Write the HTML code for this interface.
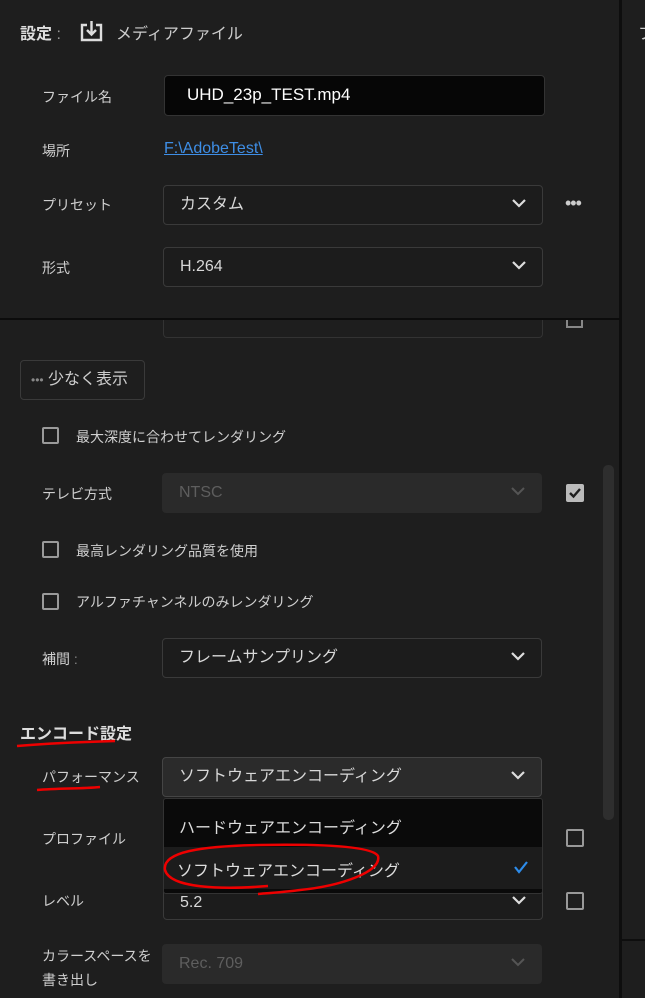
<!DOCTYPE html>
<html><head><meta charset="utf-8"><style>
*{margin:0;padding:0;box-sizing:border-box}
body{width:645px;height:998px;background:#1e1e1e;overflow:hidden;position:relative;font-family:"Liberation Sans","Noto Sans CJK JP",sans-serif;color:#d0d0d0}
.a{position:absolute;white-space:nowrap}
.lb{font-size:14px;color:#cfcfcf}
.sel{position:absolute;left:163px;width:380px;height:40px;border:1px solid #3a3a3a;border-radius:4px;background:#1c1c1c;font-size:16px;color:#d8d8d8;padding-left:16px;line-height:38px}
.dis{background:#2a2a2a;border-color:#2a2a2a;color:#5e5e5e}
.chev{position:absolute;right:16px;top:13px;width:14px;height:9px}
.cb{position:absolute;width:17px;height:17px;border:2px solid #9a9a9a;border-radius:2px}
</style></head><body>
<div class="a" style="left:0;top:0;width:620px;height:318px;background:#1e1e1e"></div>
<div class="a" style="left:619px;top:0;width:3px;height:998px;background:#0e0e0e"></div>
<div class="a" style="left:622px;top:939px;width:23px;height:2px;background:#0e0e0e"></div>
<div class="a" style="left:638px;top:20px;font-size:16px;color:#ccc">フ</div>

<div class="a" style="left:20px;top:20px;font-size:16px;font-weight:bold;color:#ddd">設定<span style="font-weight:normal;color:#999"> :</span></div>
<svg class="a" style="left:80px;top:20px" width="23" height="22" viewBox="0 0 23 22"><path d="M7 5H2V20H21V5H16" fill="none" stroke="#ddd" stroke-width="2.4"/><path d="M11.5 1V14M7 10L11.5 14.5L16 10" fill="none" stroke="#ddd" stroke-width="2.4"/></svg>
<div class="a" style="left:116px;top:20px;font-size:16px;color:#ccc">メディアファイル</div>

<div class="a lb" style="left:42px;top:87px">ファイル名</div>
<div class="a" style="left:164px;top:75px;width:381px;height:41px;background:#060606;border:1px solid #333;border-radius:4px;font-size:17px;color:#fff;padding-left:22px;line-height:38px">UHD_23p_TEST.mp4</div>
<div class="a lb" style="left:42px;top:141px">場所</div>
<div class="a" style="left:164px;top:140px;font-size:16px;color:#3e8ee6;text-decoration:underline">F:\AdobeTest\</div>
<div class="a lb" style="left:42px;top:195px">プリセット</div>
<div class="sel" style="top:185px">カスタム<svg class="chev" viewBox="0 0 14 9"><path d="M1 1L7 7L13 1" fill="none" stroke="#ddd" stroke-width="2.2"/></svg></div>
<div class="a" style="left:565px;top:193px;font-size:18px;color:#ccc;letter-spacing:-1px">•••</div>
<div class="a lb" style="left:42px;top:258px">形式</div>
<div class="sel" style="top:247px">H.264<svg class="chev" viewBox="0 0 14 9"><path d="M1 1L7 7L13 1" fill="none" stroke="#ddd" stroke-width="2.2"/></svg></div>

<div class="a" style="left:0;top:318px;width:620px;height:2px;background:#0c0c0c"></div>
<div class="a" style="left:163px;top:320px;width:380px;height:18px;border:1px solid #333;border-top:none;border-radius:0 0 4px 4px"></div>
<div class="a" style="left:566px;top:320px;width:17px;height:8px;border:2px solid #888;border-top:none"></div>

<div class="a" style="left:20px;top:360px;width:125px;height:40px;border:1px solid #3a3a3a;border-radius:4px;font-size:16px;color:#ccc;line-height:38px;padding-left:10px"><span style="color:#888;font-size:12px">•••</span> 少なく表示</div>

<div class="cb" style="left:42px;top:427px"></div>
<div class="a lb" style="left:76px;top:427px">最大深度に合わせてレンダリング</div>
<div class="a lb" style="left:42px;top:484px">テレビ方式</div>
<div class="sel dis" style="left:162px;top:473px">NTSC<svg class="chev" viewBox="0 0 14 9"><path d="M1 1L7 7L13 1" fill="none" stroke="#555" stroke-width="2"/></svg></div>
<div class="a" style="left:566px;top:484px;width:18px;height:18px;background:#bbb;border-radius:2px"><svg width="18" height="18" viewBox="0 0 18 18"><path d="M4 9L7.5 12.5L14 5" fill="none" stroke="#1e1e1e" stroke-width="2.4"/></svg></div>
<div class="cb" style="left:42px;top:541px"></div>
<div class="a lb" style="left:76px;top:541px">最高レンダリング品質を使用</div>
<div class="cb" style="left:42px;top:593px"></div>
<div class="a lb" style="left:76px;top:592px">アルファチャンネルのみレンダリング</div>
<div class="a lb" style="left:42px;top:649px">補間 <span style="color:#888">:</span></div>
<div class="sel" style="left:162px;top:638px">フレームサンプリング<svg class="chev" viewBox="0 0 14 9"><path d="M1 1L7 7L13 1" fill="none" stroke="#ddd" stroke-width="2.2"/></svg></div>

<div class="a" style="left:603px;top:465px;width:11px;height:355px;background:#2e2e2e;border-radius:5px"></div>

<div class="a" style="left:20px;top:720px;font-size:16px;font-weight:bold;color:#ddd">エンコード設定</div>
<div class="a lb" style="left:42px;top:767px">パフォーマンス</div>
<div class="sel" style="left:162px;top:757px;background:#2b2b2b;border-color:#454545">ソフトウェアエンコーディング<svg class="chev" viewBox="0 0 14 9"><path d="M1 1L7 7L13 1" fill="none" stroke="#ddd" stroke-width="2.2"/></svg></div>

<div class="a lb" style="left:42px;top:829px">プロファイル</div>
<div class="a" style="left:566px;top:829px;width:18px;height:18px;border:2px solid #999;border-radius:2px"></div>
<div class="a lb" style="left:42px;top:891px">レベル</div>
<div class="sel" style="left:163px;top:880px;height:40px;padding-top:3px">5.2<svg class="chev" style="top:15px" viewBox="0 0 14 9"><path d="M1 1L7 7L13 1" fill="none" stroke="#ddd" stroke-width="2.2"/></svg></div>
<div class="a" style="left:566px;top:892px;width:18px;height:18px;border:2px solid #999;border-radius:2px"></div>

<div class="a" style="left:163px;top:798px;width:380px;height:96px;background:#0a0a0a;border:1px solid #333;border-radius:3px;overflow:hidden">
 <div style="height:48px;font-size:16px;color:#ddd;padding:15px 0 0 15px">ハードウェアエンコーディング</div>
 <div style="height:42px;background:#1c1c1c;font-size:16px;color:#ddd;padding:10px 0 0 13px;position:relative">ソフトウェアエンコーディング<svg style="position:absolute;right:14px;top:13px" width="14" height="14" viewBox="0 0 14 14"><path d="M1 7L5 12L13 2" fill="none" stroke="#2d8ceb" stroke-width="2.2"/></svg></div>
</div>

<div class="a lb" style="left:42px;top:944px;line-height:24px;white-space:normal;width:110px">カラースペースを書き出し</div>
<div class="sel dis" style="left:162px;top:944px">Rec. 709<svg class="chev" viewBox="0 0 14 9"><path d="M1 1L7 7L13 1" fill="none" stroke="#555" stroke-width="2"/></svg></div>

<svg class="a" style="left:0;top:0" width="645" height="998" viewBox="0 0 645 998">
<path d="M17 746C40 744 80 742 115 741" fill="none" stroke="#e00" stroke-width="2.5"/>
<path d="M37 790C60 788 80 789 100 787" fill="none" stroke="#e00" stroke-width="2.5"/>
<path d="M268 886C220 890 170 888 165 870C162 852 200 846 260 845C320 844 372 846 378 856C382 872 340 886 300 890C285 892 270 893 258 894" fill="none" stroke="#e00" stroke-width="2.5"/>
</svg>
</body></html>
